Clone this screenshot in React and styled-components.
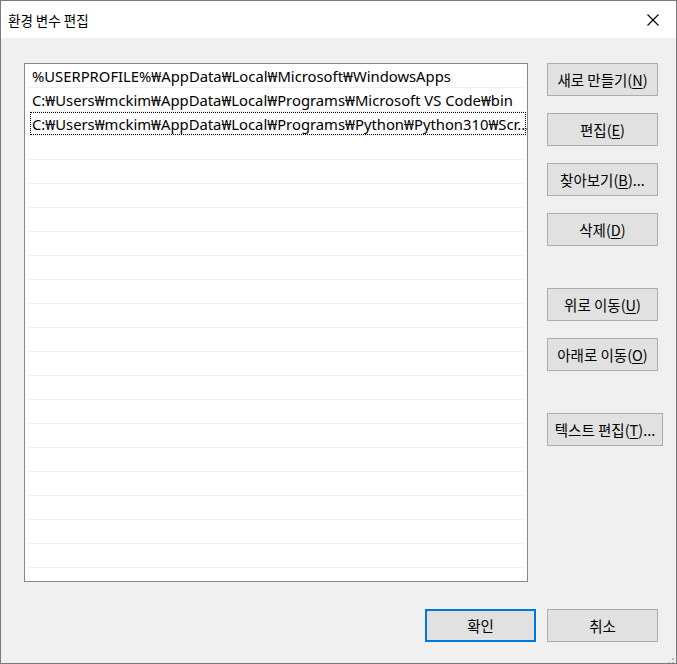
import React from "react";
import styled, { createGlobalStyle } from "styled-components";

const GlobalStyle = createGlobalStyle`
  html, body {
    margin: 0;
    padding: 0;
    background: #f0f0f0;
  }
  body {
    font-family: "Noto Sans CJK KR", "Noto Sans", sans-serif;
  }
`;

const Window = styled.div`
  width: 677px;
  height: 664px;
  box-sizing: border-box;
  border: 1px solid #7a7a7a;
  background: #f0f0f0;
  display: flex;
  flex-direction: column;
  position: relative;
  overflow: hidden;
`;

const TitleBar = styled.div`
  height: 37px;
  background: #fff;
  display: flex;
  align-items: center;
  justify-content: space-between;
  padding-left: 7px;
  flex-shrink: 0;
`;

const Title = styled.span`
  font-size: 13.5px;
  color: #000;
`;

const CloseButton = styled.div`
  width: 46px;
  height: 37px;
  display: flex;
  align-items: center;
  justify-content: center;
`;

const Body = styled.div`
  flex: 1;
  display: flex;
  flex-direction: column;
  padding: 25px 0 0 23px;
`;

const MainRow = styled.div`
  display: flex;
  gap: 19px;
`;

const ListBox = styled.div`
  width: 504px;
  height: 519px;
  flex-shrink: 0;
  box-sizing: border-box;
  border: 1px solid #828790;
  background: #fff;
  overflow: hidden;
  padding: 0 2px;
`;

const Row = styled.div`
  height: 24px;
  box-sizing: border-box;
  border-bottom: 1px solid #f0f0f0;
  padding: 1px 5px 0 5px;
  display: flex;
  align-items: center;
  font-family: "Noto Sans", "Noto Sans CJK KR", sans-serif;
  font-size: 14.8px;
  color: #000;
  white-space: nowrap;
  position: relative;
`;

const Focus = styled.div`
  position: absolute;
  inset: 0 -1px 0 3px;
  border: 1px dotted #000;
  pointer-events: none;
`;

const ButtonColumn = styled.div`
  display: flex;
  flex-direction: column;
  align-items: flex-start;
`;

const Button = styled.div`
  width: ${(p) => p.w || 111}px;
  height: 33px;
  margin-top: ${(p) => p.mt || 0}px;
  box-sizing: border-box;
  border: ${(p) => (p.primary ? "2px solid #0078d7" : "1px solid #adadad")};
  background: #e1e1e1;
  display: flex;
  align-items: center;
  justify-content: center;
  font-size: 14.5px;
  color: #000;
  white-space: nowrap;
  u {
    text-decoration: underline;
    text-underline-offset: 2px;
  }
`;

const Footer = styled.div`
  display: flex;
  justify-content: flex-end;
  gap: 11px;
  margin-top: 27px;
  padding-right: 18px;
`;

const Grip = styled.div`
  position: absolute;
  right: 1px;
  bottom: 1px;
  width: 12px;
  height: 12px;
`;

const entries = [
  "%USERPROFILE%₩AppData₩Local₩Microsoft₩WindowsApps",
  "C:₩Users₩mckim₩AppData₩Local₩Programs₩Microsoft VS Code₩bin",
  "C:₩Users₩mckim₩AppData₩Local₩Programs₩Python₩Python310₩Scr...",
];

export default function App() {
  const rows = [];
  for (let i = 0; i < 22; i++) rows.push(entries[i] || "");

  return (
    <>
      <GlobalStyle />
      <Window>
        <TitleBar>
          <Title>환경 변수 편집</Title>
          <CloseButton>
            <svg width="12" height="12" viewBox="0 0 12 12">
              <path d="M0.5 0.5L11.5 11.5M11.5 0.5L0.5 11.5" stroke="#000" strokeWidth="1.1" />
            </svg>
          </CloseButton>
        </TitleBar>
        <Body>
          <MainRow>
            <ListBox>
              {rows.map((r, i) => (
                <Row key={i}>
                  {r}
                  {i === 2 && <Focus />}
                </Row>
              ))}
            </ListBox>
            <ButtonColumn>
              <Button>
                새로 만들기(<u>N</u>)
              </Button>
              <Button mt={17}>
                편집(<u>E</u>)
              </Button>
              <Button mt={17}>
                찾아보기(<u>B</u>)...
              </Button>
              <Button mt={17}>
                삭제(<u>D</u>)
              </Button>
              <Button mt={42}>
                위로 이동(<u>U</u>)
              </Button>
              <Button mt={17}>
                아래로 이동(<u>O</u>)
              </Button>
              <Button mt={42} w={116}>
                텍스트 편집(<u>T</u>)...
              </Button>
            </ButtonColumn>
          </MainRow>
          <Footer>
            <Button primary>확인</Button>
            <Button>취소</Button>
          </Footer>
        </Body>
        <Grip>
          <svg width="12" height="12" viewBox="0 0 12 12">
            <rect x="9" y="1" width="2" height="2" fill="#b9b9b9" />
            <rect x="5" y="5" width="2" height="2" fill="#b9b9b9" />
            <rect x="9" y="5" width="2" height="2" fill="#b9b9b9" />
            <rect x="1" y="9" width="2" height="2" fill="#b9b9b9" />
            <rect x="5" y="9" width="2" height="2" fill="#b9b9b9" />
            <rect x="9" y="9" width="2" height="2" fill="#b9b9b9" />
          </svg>
        </Grip>
      </Window>
    </>
  );
}
